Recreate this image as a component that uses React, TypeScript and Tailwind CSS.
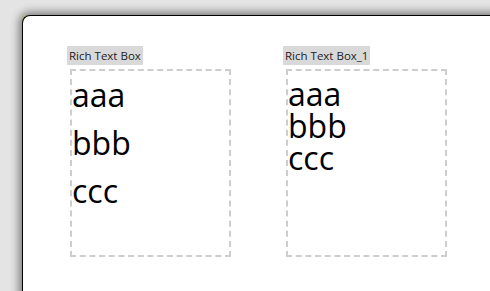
export default function App() {
  const font = { fontFamily: '"Open Sans", "Noto Sans", sans-serif' };
  return (
    <div
      className="relative w-[490px] h-[291px] overflow-hidden bg-[#e4e4e4] pl-[22px] pt-[15px]"
      style={font}
    >
      <div className="absolute left-[22px] top-[15px] w-[6px] h-[6px] bg-[#eeecc4]" />
      <div className="relative w-[520px] h-[320px] bg-white border-t border-l border-black rounded-tl-[8px] shadow-[0_0_9px_3px_rgba(0,0,0,0.45)] pl-[44px] pt-[30px] flex gap-[52px]">
        <div className="flex flex-col items-start">
          <div className="h-[19px] px-[2px] bg-[#d9d9d9] text-[11.5px] leading-[19px] text-[#222]">
            Rich Text Box
          </div>
          <div className="ml-[3px] mt-[4px] w-[161px] h-[188px] border-2 border-dashed border-[#cdcdcd] text-[32px] leading-[48px] text-black">
            <div>aaa</div>
            <div>bbb</div>
            <div>ccc</div>
          </div>
        </div>
        <div className="flex flex-col items-start">
          <div className="h-[19px] px-[2px] bg-[#d9d9d9] text-[11.5px] leading-[19px] text-[#222]">
            Rich Text Box_1
          </div>
          <div className="ml-[3px] mt-[4px] w-[161px] h-[188px] border-2 border-dashed border-[#cdcdcd] pt-[7px] text-[32px] leading-[32px] text-black">
            <div>aaa</div>
            <div>bbb</div>
            <div>ccc</div>
          </div>
        </div>
      </div>
    </div>
  );
}
